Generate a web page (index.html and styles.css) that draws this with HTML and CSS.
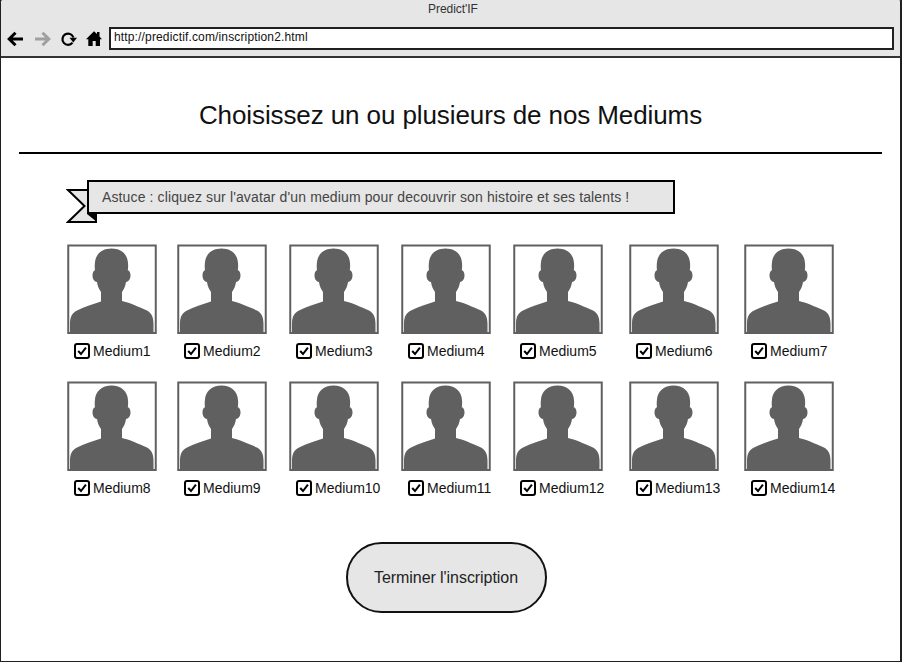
FILE: index.html
```
<!DOCTYPE html>
<html lang="fr">
<head>
<meta charset="utf-8">
<title>Predict'IF</title>
<link rel="stylesheet" href="styles.css">
</head>
<body>
<svg class="sprites" aria-hidden="true">
  <symbol id="avatar" viewBox="0 0 90 90">
    <path fill="#606060" d="M3 89V80C3 73 5 69 10 66.500C18 62.500 26 60 34 57.500V48C32 45 30.500 42 30 38C27 37.500 25.500 34.500 25.500 31.500C25.500 28.500 26.500 26.500 28 26.200C27.600 24 27.700 21 27.900 19C28.500 10 35 4.500 44.500 4.500C54 4.500 60.500 10 61 19C61.200 21 61.200 24 60.800 26.200C62.500 26.500 63.500 28.500 63.500 31.500C63.500 34.500 62 37.500 59 38C58.500 42 57 45 55 48V57C62 58.500 71 62.500 80 66.500C84.500 69 86.500 73 86.500 80V89Z"/>
    <rect x="1.250" y="1.500" width="87.500" height="87.500" fill="none" stroke="#606060" stroke-width="2"/>
  </symbol>
  <symbol id="check" viewBox="0 0 16 16">
    <rect x="1" y="1" width="14" height="14" rx="2" fill="#fff" stroke="#000" stroke-width="2"/>
    <path d="M4.200 8L7 11L11.900 4.700" fill="none" stroke="#000" stroke-width="2"/>
  </symbol>
</svg>
<div class="window">
  <header class="chrome">
    <div class="window-title"><span>Predict'IF</span></div>
    <div class="toolbar">
      <svg class="nav" viewBox="0 0 102 20">
        <path d="M23 10H9.500M15.500 3.700L9.200 10L15.500 16.300" fill="none" stroke="#000" stroke-width="3"/>
        <path d="M35 10H48.500M42.500 3.700L48.800 10L42.500 16.300" fill="none" stroke="#a0a0a0" stroke-width="3"/>
        <path d="M72.500 13.600A5.600 5.600 0 1 1 73.400 8.500" fill="none" stroke="#000" stroke-width="2.200"/>
        <path d="M69.500 8.800H77L73.300 13.600Z"/>
        <path d="M86 10.300L94 2.300L97 5V3H99.500V7.500L102 10.300H100V17H95.700V12H92.700V17H88.300V10.300Z"/>
      </svg>
      <div class="address"><span>http://predictif.com/inscription2.html</span></div>
    </div>
  </header>
  <main>
    <h1><span>Choisissez un ou plusieurs de nos Mediums</span></h1>
    <div class="tip">
      <svg class="ribbon" viewBox="0 0 32 36"><path d="M2 2H30V34H2L18.500 18Z" fill="#e6e6e6" stroke="#000" stroke-width="2"/><path d="M21 26H31V34Z"/></svg>
      <p><span>Astuce : cliquez sur l'avatar d'un medium pour decouvrir son histoire et ses talents !</span></p>
    </div>
    <div class="mediums">
      <div class="medium"><svg class="avatar"><use href="#avatar"/></svg><label><svg class="check"><use href="#check"/></svg><span>Medium1</span></label></div>
      <div class="medium"><svg class="avatar"><use href="#avatar"/></svg><label><svg class="check"><use href="#check"/></svg><span>Medium2</span></label></div>
      <div class="medium"><svg class="avatar"><use href="#avatar"/></svg><label><svg class="check"><use href="#check"/></svg><span>Medium3</span></label></div>
      <div class="medium"><svg class="avatar"><use href="#avatar"/></svg><label><svg class="check"><use href="#check"/></svg><span>Medium4</span></label></div>
      <div class="medium"><svg class="avatar"><use href="#avatar"/></svg><label><svg class="check"><use href="#check"/></svg><span>Medium5</span></label></div>
      <div class="medium"><svg class="avatar"><use href="#avatar"/></svg><label><svg class="check"><use href="#check"/></svg><span>Medium6</span></label></div>
      <div class="medium"><svg class="avatar"><use href="#avatar"/></svg><label><svg class="check"><use href="#check"/></svg><span>Medium7</span></label></div>
      <div class="medium"><svg class="avatar"><use href="#avatar"/></svg><label><svg class="check"><use href="#check"/></svg><span>Medium8</span></label></div>
      <div class="medium"><svg class="avatar"><use href="#avatar"/></svg><label><svg class="check"><use href="#check"/></svg><span>Medium9</span></label></div>
      <div class="medium"><svg class="avatar"><use href="#avatar"/></svg><label><svg class="check"><use href="#check"/></svg><span>Medium10</span></label></div>
      <div class="medium"><svg class="avatar"><use href="#avatar"/></svg><label><svg class="check"><use href="#check"/></svg><span>Medium11</span></label></div>
      <div class="medium"><svg class="avatar"><use href="#avatar"/></svg><label><svg class="check"><use href="#check"/></svg><span>Medium12</span></label></div>
      <div class="medium"><svg class="avatar"><use href="#avatar"/></svg><label><svg class="check"><use href="#check"/></svg><span>Medium13</span></label></div>
      <div class="medium"><svg class="avatar"><use href="#avatar"/></svg><label><svg class="check"><use href="#check"/></svg><span>Medium14</span></label></div>
    </div>
    <button class="finish" type="button">Terminer l'inscription</button>
  </main>
</div>
</body>
</html>
```
FILE: styles.css
```
* { box-sizing: border-box; }
body { margin: 0; background: #231f20; font-family: "Liberation Sans", Arial, sans-serif; color: #111; }
.sprites { display: none; }
.window {
  height: 662px;
  background: #fff;
  border: solid #231f20;
  border-width: 0 2px 1px 1px;
  border-radius: 3px 3px 0 0;
  overflow: hidden;
}
.chrome { height: 58px; background: #e6e6e6; border-bottom: 2px solid #333; }
.window-title { height: 27px; text-align: center; font-size: 12px; line-height: 18px; padding-left: 5px; letter-spacing: -0.05px; color: #333; }
.toolbar { display: flex; }
.nav { width: 102px; height: 20px; margin: 2px 6px 0 -1px; flex: none; }
.address {
  flex: 1;
  height: 23px;
  margin: 0 6px 0 1px;
  padding-left: 3px;
  background: #fff;
  border: 2px solid #231f20;
  font-size: 12px;
  line-height: 17px;
  letter-spacing: 0.15px;
  white-space: nowrap;
}
main { padding: 0 18px; display: flex; flex-direction: column; }
h1 {
  margin: 0;
  height: 96px;
  padding-top: 37px;
  border-bottom: 2px solid #000;
  text-align: center;
  font-size: 26px;
  line-height: 40px;
  letter-spacing: -0.1px;
  font-weight: 400;
  white-space: nowrap;
}
.tip { display: flex; margin: 26px 0 0 47px; height: 44px; }
.ribbon { width: 32px; height: 36px; margin-top: 8px; flex: none; }
.tip p {
  position: relative;
  width: 588px;
  height: 34px;
  margin: 0 0 0 -11px;
  padding-left: 13px;
  border: 2px solid #000;
  background: #e6e6e6;
  font-size: 14px;
  line-height: 30px;
  letter-spacing: 0.125px;
  color: #444;
  white-space: nowrap;
}
.mediums {
  display: grid;
  grid-template-columns: 110px 112px 112px 112px 116px 115px 100px;
  grid-auto-rows: 137px;
  margin: 20px 0 0 48px;
}
.avatar { display: block; width: 90px; height: 90px; }
label { display: flex; align-items: center; gap: 3px; margin: 9px 0 0 7px; height: 16px; font-size: 14px; white-space: nowrap; }
.check { width: 16px; height: 16px; flex: none; }
.finish {
  align-self: center;
  width: 201px;
  height: 71px;
  margin: 24px 9px 0 0;
  border: 2px solid #111;
  border-radius: 36px;
  background: #e6e6e6;
  font: 16px "Liberation Sans", Arial, sans-serif;
  letter-spacing: -0.06px;
  color: #222;
  white-space: nowrap;
}
```
